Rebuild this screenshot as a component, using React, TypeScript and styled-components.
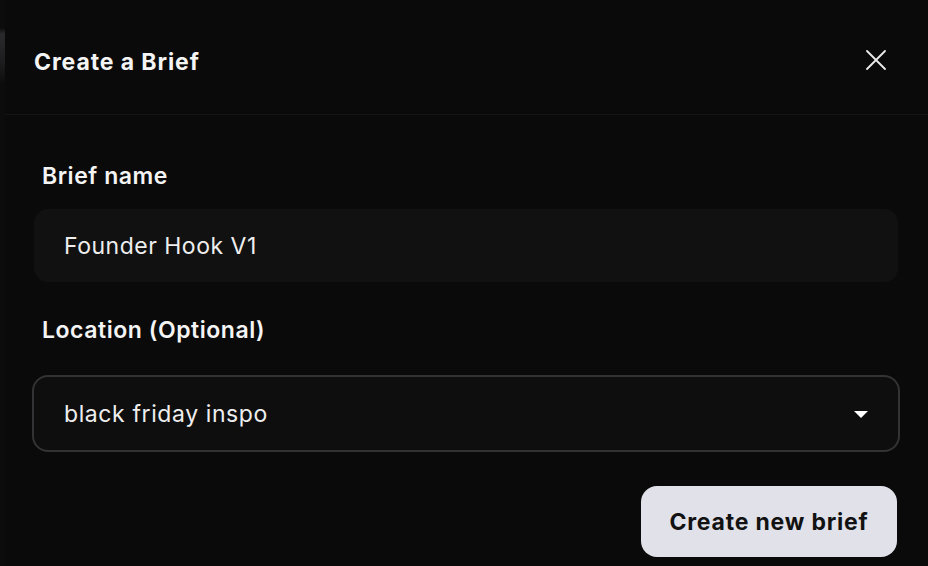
import * as React from 'react';
import styled, { createGlobalStyle } from 'styled-components';

const GlobalStyle = createGlobalStyle`
  html, body {
    margin: 0;
    padding: 0;
    background: #0a0a0a;
  }

  body {
    font-family: Inter, "Noto Sans", "Liberation Sans", sans-serif;
    -webkit-font-smoothing: antialiased;
  }
`;

type Field = {
  label: string;
  value: string;
};

const nameField: Field = { label: 'Brief name', value: 'Founder Hook V1' };
const locationField: Field = {
  label: 'Location (Optional)',
  value: 'black friday inspo',
};

export default function App() {
  return (
    <>
      <GlobalStyle />
      <Screen>
        <Backdrop />
        <Dialog>
          <Header>
            <Title>Create a Brief</Title>
            <CloseButton aria-label="Close">
              <svg width="20" height="20" viewBox="0 0 20 20" fill="none">
                <path
                  d="M1 1L19 19M19 1L1 19"
                  stroke="#ececec"
                  strokeWidth="1.8"
                  strokeLinecap="round"
                />
              </svg>
            </CloseButton>
          </Header>

          <Body>
            <Label>{nameField.label}</Label>
            <TextInput>{nameField.value}</TextInput>

            <Label spaced>{locationField.label}</Label>
            <Select>
              <span>{locationField.value}</span>
              <Caret />
            </Select>

            <Footer>
              <PrimaryButton>Create new brief</PrimaryButton>
            </Footer>
          </Body>
        </Dialog>
      </Screen>
    </>
  );
}

const Screen = styled.div`
  display: flex;
  width: 928px;
  height: 566px;
  overflow: hidden;
  background: #0a0a0a;
`;

const Backdrop = styled.div`
  flex: 0 0 5px;
  background: linear-gradient(
    to bottom,
    #0c0c0c 0px,
    #0c0c0c 28px,
    #2a2a2c 34px,
    #1e1e20 60px,
    #131313 76px,
    #0c0c0c 84px
  );
`;

const Dialog = styled.div`
  flex: 1;
  display: flex;
  flex-direction: column;
  background: #0a0a0a;
`;

const Header = styled.header`
  display: flex;
  align-items: center;
  justify-content: space-between;
  box-sizing: border-box;
  height: 115px;
  padding: 10px 40px 0 29px;
  border-bottom: 1px solid #151515;
`;

const Title = styled.h1`
  margin: 0;
  color: #f4f4f4;
  font-size: 23px;
  line-height: 28px;
  font-weight: 700;
  letter-spacing: 0.9px;
`;

const CloseButton = styled.button`
  display: flex;
  align-items: center;
  justify-content: center;
  width: 24px;
  height: 24px;
  margin-top: -4px;
  padding: 0;
  border: 0;
  background: transparent;
  cursor: pointer;
`;

const Body = styled.div`
  display: flex;
  flex-direction: column;
  padding: 47px 30px 0 29px;
`;

const Label = styled.label<{ spaced?: boolean }>`
  display: block;
  margin: ${({ spaced }) => (spaced ? '34px' : '0')} 0 0 8px;
  color: #f4f4f4;
  font-size: 23px;
  line-height: 29px;
  font-weight: 600;
  letter-spacing: 0.55px;
`;

const TextInput = styled.div`
  display: flex;
  align-items: center;
  box-sizing: border-box;
  height: 73px;
  margin-top: 18px;
  padding: 0 30px;
  border-radius: 14px;
  background: #111111;
  color: #eeeeee;
  font-size: 23px;
  font-weight: 400;
  letter-spacing: 0.5px;
`;

const Select = styled.div`
  display: flex;
  align-items: center;
  justify-content: space-between;
  box-sizing: border-box;
  height: 77px;
  margin: 30px -2px 0;
  padding: 0 30px 0 30px;
  border: 2px solid #333335;
  border-radius: 16px;
  background: #0e0e0e;
  color: #eeeeee;
  font-size: 23px;
  font-weight: 400;
  letter-spacing: 0.6px;
`;

const Caret = styled.span`
  width: 0;
  height: 0;
  margin-top: 2px;
  border-left: 7px solid transparent;
  border-right: 7px solid transparent;
  border-top: 7px solid #ffffff;
`;

const Footer = styled.div`
  display: flex;
  justify-content: flex-end;
  margin-top: 34px;
  padding-right: 1px;
`;

const PrimaryButton = styled.button`
  box-sizing: border-box;
  height: 71px;
  width: 256px;
  padding: 0;
  border: 0;
  border-radius: 16px;
  background: #e1e1e9;
  color: #121212;
  font-family: inherit;
  font-size: 23px;
  font-weight: 700;
  letter-spacing: 0.8px;
  cursor: pointer;
`;
